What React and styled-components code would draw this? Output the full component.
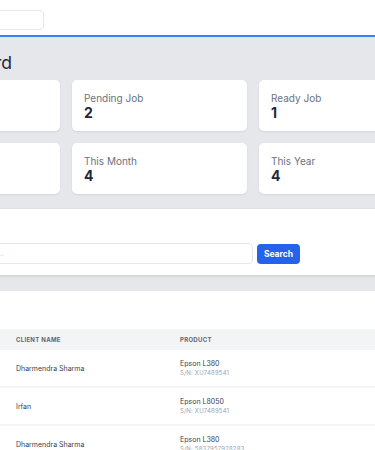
import styled, { createGlobalStyle } from "styled-components"

const GlobalStyle = createGlobalStyle`
  html, body {
    margin: 0;
    padding: 0;
    background: #ffffff;
    overflow: hidden;
  }
  body {
    font-family: Inter, "Noto Sans", "Liberation Sans", sans-serif;
    color: #1f2937;
  }
  * { box-sizing: border-box; }
`

const Viewport = styled.div`
  width: 375px;
  height: 450px;
  overflow: hidden;
`

// the page is wider than the window, it's scrolled so the left part is hidden
const Page = styled.div`
  width: 620px;
  margin-left: -127px;
`

const TopBar = styled.header`
  height: 37px;
  padding: 8px 12px 0;
  background: #ffffff;
  border-bottom: 2px solid #3b82f6;
`

const NavSearch = styled.input`
  width: 159px;
  height: 20px;
  border: 1px solid #e5e7eb;
  border-radius: 4px;
  outline: none;
  background: #fff;
`

const Main = styled.main`
  background: #e5e7eb;
  padding: 14px 12px 15px;
`

const Title = styled.h1`
  margin: 0 0 5px;
  font-size: 17.6px;
  line-height: 24px;
  font-weight: 400;
  color: #1f2937;
`

const Cards = styled.div`
  display: grid;
  grid-template-columns: repeat(3, 175px);
  gap: 12px;
`

const Card = styled.div`
  background: #ffffff;
  border-radius: 5px;
  padding: 12px 12px 11px;
  height: 51px;
  box-shadow: 0 1px 2px rgba(0, 0, 0, 0.08);
`

const CardLabel = styled.div`
  font-size: 10px;
  line-height: 12px;
  color: #6b7280;
`

const CardValue = styled.div`
  font-size: 14px;
  line-height: 17px;
  font-weight: 700;
  color: #1f2937;
`

const Panel = styled.section`
  background: #ffffff;
  padding: ${p => p.$pad || "14px 12px 11px"};
  box-shadow: ${p => p.$shadow ? "0 1px 3px rgba(0, 0, 0, 0.12)" : "none"};
  position: relative;
`

const Gap = styled.div`
  height: 16px;
  background: #e5e7eb;
`

const FieldLabel = styled.label`
  display: block;
  font-size: 9px;
  line-height: 14px;
  font-weight: 600;
  color: #374151;
  margin-bottom: 6px;
`

const SearchRow = styled.div`
  display: flex;
  align-items: center;
  gap: 4px;
  height: 21px;
`

const SearchInput = styled.input`
  width: 368px;
  height: 21px;
  border: 1px solid #e5e7eb;
  border-radius: 4px;
  padding: 0 8px;
  font-family: inherit;
  font-size: 7.5px;
  outline: none;
  &::placeholder { color: #c3c6cc; }
`

const SearchButton = styled.button`
  height: 20px;
  width: 43px;
  border: none;
  border-radius: 4px;
  background: #2563eb;
  color: #ffffff;
  font-family: inherit;
  font-size: 8.5px;
  font-weight: 700;
  padding: 0;
`

const TableTitle = styled.h2`
  margin: 0;
  height: 38px;
  padding: 12px 12px 0;
  font-size: 11px;
  font-weight: 600;
  color: #1f2937;
`

const Row = styled.div`
  display: grid;
  grid-template-columns: 131px 164px 1fr;
  align-items: center;
  height: ${p => p.$head ? "21px" : "38px"};
  background: ${p => p.$head ? "#f3f4f6" : "#ffffff"};
  border-bottom: ${p => p.$head ? "none" : "2px solid #f3f4f6"};
`

const HeadCell = styled.div`
  padding: 0 12px;
  font-size: 6px;
  font-weight: 700;
  letter-spacing: 0.05em;
  text-transform: uppercase;
  color: #5f6672;
`

const Cell = styled.div`
  padding: 0 12px;
  font-size: 7px;
  color: #374151;
`

const Product = styled.div`
  font-size: 7px;
  line-height: 10px;
  color: #374151;
`

const Serial = styled.div`
  font-size: 6px;
  line-height: 8px;
  letter-spacing: 0.03em;
  color: #9ca3af;
`

const stats = [
  { label: "Total Job", value: 7 },
  { label: "Pending Job", value: 2 },
  { label: "Ready Job", value: 1 },
  { label: "Today", value: 0 },
  { label: "This Month", value: 4 },
  { label: "This Year", value: 4 },
]

const jobs = [
  { id: "JOB-0007", client: "Dharmendra Sharma", product: "Epson L380", sn: "XU7489541" },
  { id: "JOB-0006", client: "Irfan", product: "Epson L8050", sn: "XU7489541" },
  { id: "JOB-0005", client: "Dharmendra Sharma", product: "Epson L380", sn: "5837957928283" },
]

export default function App() {
  return (
    <Viewport>
      <GlobalStyle />
      <Page>
        <TopBar>
          <NavSearch />
        </TopBar>

        <Main>
          <Title>Job Dashboard</Title>
          <Cards>
            {stats.map(s => (
              <Card key={s.label}>
                <CardLabel>{s.label}</CardLabel>
                <CardValue>{s.value}</CardValue>
              </Card>
            ))}
          </Cards>
        </Main>

        <Panel $shadow>
          <FieldLabel>Search Job</FieldLabel>
          <SearchRow>
            <SearchInput placeholder="Search by job id, client name..." />
            <SearchButton>Search</SearchButton>
          </SearchRow>
        </Panel>

        <Gap />

        <Panel $pad="0">
          <TableTitle>Recent Jobs</TableTitle>
          <Row $head>
            <HeadCell>Job ID</HeadCell>
            <HeadCell>Client Name</HeadCell>
            <HeadCell>Product</HeadCell>
          </Row>
          {jobs.map(j => (
            <Row key={j.id}>
              <Cell>{j.id}</Cell>
              <Cell>{j.client}</Cell>
              <Cell>
                <Product>{j.product}</Product>
                <Serial>S/N: {j.sn}</Serial>
              </Cell>
            </Row>
          ))}
        </Panel>
      </Page>
    </Viewport>
  )
}
